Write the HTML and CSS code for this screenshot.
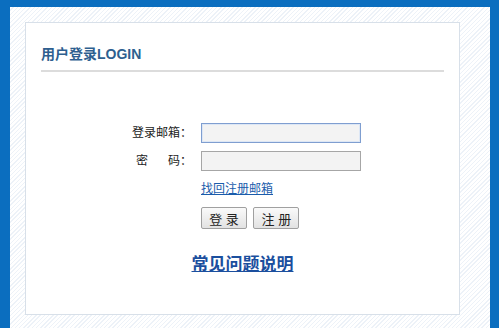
FILE: index.html
```html
<!DOCTYPE html>
<html lang="zh-CN">
<head>
  <meta charset="UTF-8" />
  <title>用户登录</title>
  <link rel="stylesheet" href="styles.css">
</head>
<body>
  <div class="frame">
    <div class="box">
      <h2 class="title">用户登录LOGIN</h2>

      <form class="login">
        <div class="row">
          <label class="lbl">登录邮箱：</label>
          <input type="text" class="txt focus" />
        </div>
        <div class="row">
          <label class="lbl"><span class="gap">密</span>码：</label>
          <input type="password" class="txt" />
        </div>
        <div class="row">
          <span class="lbl"></span>
          <a href="#" class="find">找回注册邮箱</a>
        </div>
        <div class="row btns">
          <span class="lbl"></span>
          <div>
            <button type="button" class="btn">登 录</button>
            <button type="button" class="btn">注 册</button>
          </div>
        </div>
      </form>

      <p class="faq"><a href="#">常见问题说明</a></p>
    </div>
  </div>
</body>
</html>
```

FILE: styles.css
```css
html, body {
  margin: 0;
  height: 100%;
}
body {
  background: #0b6ebf;
  font-family: "Liberation Sans", "Noto Sans CJK SC", sans-serif;
  font-size: 12px;
  color: #222;
  overflow: hidden;
}
.frame {
  margin: 7px 9px 0 10px;
  height: calc(100% - 7px);
  box-sizing: border-box;
  padding: 15px 30px 13px 15px;
  background: #fff repeating-linear-gradient(135deg, #fff 0, #fff 2px, #edf2f8 2px, #edf2f8 3px);
}
.box {
  height: 100%;
  box-sizing: border-box;
  background: #fff;
  border: 1px solid #d8e0e9;
  padding: 0 15px;
}
.title {
  margin: 0;
  padding: 21px 0 6px;
  font-size: 14px;
  line-height: 20px;
  font-weight: bold;
  color: #2e5f8f;
  border-bottom: 2px solid #dcdcdc;
}
.login {
  margin: 51px 0 0 91px;
}
.row {
  display: flex;
  align-items: center;
  margin-bottom: 8px;
}
.lbl {
  width: 60px;
  margin-right: 9px;
  text-align: right;
  line-height: 20px;
  flex: none;
}
.gap {
  margin-right: 20px;
}
.txt {
  width: 160px;
  height: 20px;
  box-sizing: border-box;
  margin: 0;
  border: 1px solid #a6a6a6;
  background: #f3f3f3;
  padding: 0 3px;
}
.txt.focus {
  border-color: #7f9ed0;
  box-shadow: inset 0 0 0 1px #dde7f5;
}
.find {
  color: #1a5cab;
  line-height: 18px;
  margin-top: 1px;
}
.btns {
  margin-top: 9px;
}
.btn {
  width: 46px;
  height: 22px;
  margin: 0 3px 0 0;
  padding: 0;
  font-family: inherit;
  font-size: 13px;
  color: #222;
  background: linear-gradient(#fafafa, #e2e2e2);
  border: 1px solid #a0a0a0;
  border-radius: 2px;
}
.faq {
  margin: 24px 0 0;
  text-align: center;
  font-size: 17px;
  line-height: 24px;
  font-weight: bold;
}
.faq a {
  color: #1b4f9e;
}
```
